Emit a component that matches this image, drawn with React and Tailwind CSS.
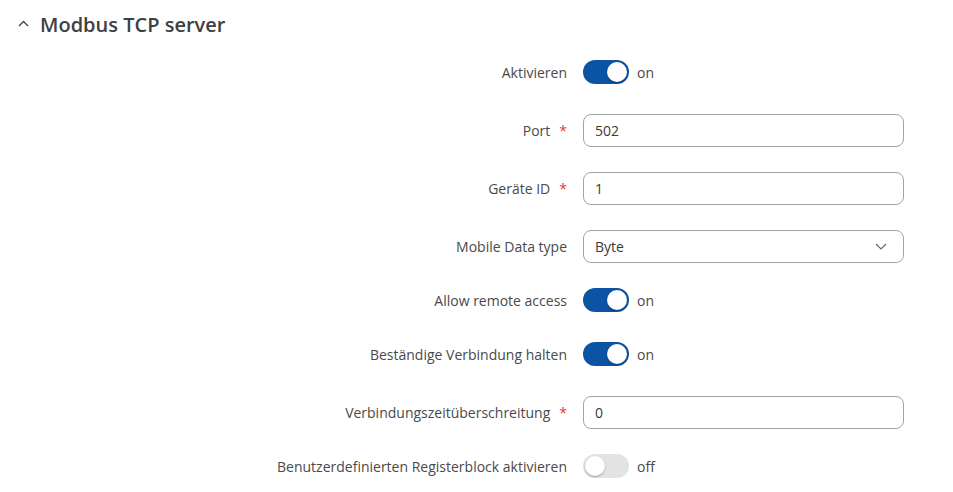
import React from 'react';

const rows = [
  { label: 'Aktivieren', type: 'toggle', on: true },
  { label: 'Port', type: 'input', value: '502', required: true },
  { label: 'Geräte ID', type: 'input', value: '1', required: true },
  { label: 'Mobile Data type', type: 'select', value: 'Byte' },
  { label: 'Allow remote access', type: 'toggle', on: true },
  { label: 'Beständige Verbindung halten', type: 'toggle', on: true },
  { label: 'Verbindungszeitüberschreitung', type: 'input', value: '0', required: true },
  { label: 'Benutzerdefinierten Registerblock aktivieren', type: 'toggle', on: false },
];

function Toggle({ on }) {
  return (
    <div className="flex items-center gap-2 h-6">
      <div
        className={`relative w-[46px] h-6 rounded-full ${on ? 'bg-[#0b54a4]' : 'bg-[#e3e3e3]'}`}
      >
        <div
          className={`absolute top-[2px] w-5 h-5 rounded-full bg-white shadow-[0_1px_2px_rgba(0,0,0,0.3)] ${on ? 'left-[24px]' : 'left-[2px]'}`}
        />
      </div>
      <span className="text-[14px] text-[#4a4a4a]">{on ? 'on' : 'off'}</span>
    </div>
  );
}

function Row({ row }) {
  const isToggle = row.type === 'toggle';
  const h = isToggle ? 'h-6' : 'h-[33px]';
  return (
    <div className={`flex items-start ${isToggle ? 'pb-[5px]' : ''}`}>
      <div className={`w-[567px] ${h} flex items-center justify-end text-[14px] text-[#4a4a4a]`}>
        {row.label}
        {row.required && <span className="ml-[9px] text-[#e23c3c]">*</span>}
      </div>
      <div className="ml-4">
        {isToggle && <Toggle on={row.on} />}
        {row.type === 'input' && (
          <div className="w-[321px] h-[33px] rounded-lg border border-[#a3a3a3] flex items-center px-[11px] text-[14px] text-[#3a3a3a]">
            {row.value}
          </div>
        )}
        {row.type === 'select' && (
          <div className="w-[321px] h-[33px] rounded-lg border border-[#a3a3a3] flex items-center justify-between pl-[11px] pr-[16px] text-[14px] text-[#3a3a3a]">
            <span>{row.value}</span>
            <svg width="12" height="7" viewBox="0 0 12 7" fill="none">
              <path d="M1 1l5 5 5-5" stroke="#666" strokeWidth="1.1" />
            </svg>
          </div>
        )}
      </div>
    </div>
  );
}

export default function App() {
  return (
    <div
      className="w-[953px] h-[492px] bg-white overflow-hidden"
      style={{ fontFamily: '"Open Sans", "Noto Sans", sans-serif' }}
    >
      <div className="flex items-center h-[50px] pl-[18px]">
        <svg width="11" height="7" viewBox="0 0 11 7" fill="none" className="mb-[4px]">
          <path d="M1 6l4.5-4.5L10 6" stroke="#404040" strokeWidth="1.3" />
        </svg>
        <h2 className="ml-[11px] text-[20px] font-semibold text-[#404040]">
          Modbus TCP server
        </h2>
      </div>
      <div className="flex flex-col gap-[25px] pt-[10px]">
        {rows.map((r, i) => (
          <Row key={i} row={r} />
        ))}
      </div>
    </div>
  );
}
